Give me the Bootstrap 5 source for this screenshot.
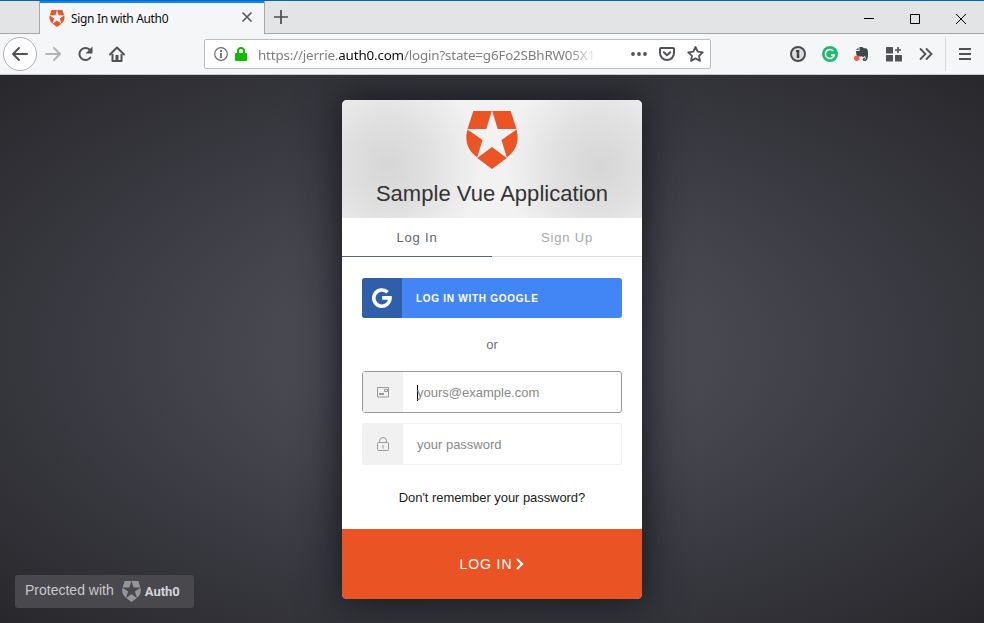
<!DOCTYPE html>
<html lang="en">
<head>
<meta charset="utf-8">
<meta name="viewport" content="width=device-width, initial-scale=1">
<title>Sign In with Auth0</title>
<link rel="stylesheet" href="https://cdn.jsdelivr.net/npm/bootstrap@5.3.0/dist/css/bootstrap.min.css">
<style>
body{width:984px;height:623px;overflow:hidden;font-family:"Liberation Sans",Arial,sans-serif;background:#2b2b30}
svg{display:block;flex:none}
.tabstrip{height:34px;background:#e3e4e6;border-top:1px solid #0a63b5;font-family:"Noto Sans","Open Sans",sans-serif}
.strip-fill{border-bottom:1px solid #a5a6a8}
.lead-gap{width:40px;border-right:1px solid #a5a6a8}
.active-tab{width:224px;background:#f5f6f7;border-top:2px solid #0a84ff;padding:0 11px 0 9px}
.tab-title{font-size:12px;letter-spacing:-.34px;color:#0c0c0d;margin-left:6px;line-height:30px}
.after-tabs{border-left:1px solid #a5a6a8}
.win-buttons{gap:32px}
.toolbar{height:41px;background:#f5f6f7;border-bottom:1px solid #c8c9cb}
.back-btn{width:34px;height:34px;border:1px solid #b1b1b3;background:#fdfdfd;margin-left:3px}
.nav-fwd{margin-left:8px}
.nav-ico{margin-left:15px}
.urlbar{width:507px;height:30px;background:#fff;border:1px solid #bcbdbf;border-radius:2px;margin-left:79px;padding:0 6px 0 9px}
.lock-ico{margin-left:7px}
.url-ico{margin-left:12px}
.url-text{width:340px;margin-left:11px;margin-right:34px;padding-top:1px;font:13.4px/28px "Noto Sans","Open Sans",sans-serif;color:#7e7e80;white-space:nowrap;letter-spacing:-.17px;
-webkit-mask-image:linear-gradient(90deg,#000 310px,transparent 340px);mask-image:linear-gradient(90deg,#000 310px,transparent 340px)}
.url-text b{font-weight:400;color:#0c0c0d}
.menu-sep{width:1px;height:34px;background:#d7d8da;margin:0 13px 0 11px}
.menu-ico{margin-right:13px}
.stage{height:548px;background:radial-gradient(ellipse farthest-corner at 50% 50%,#55555f 0%,#46464f 35%,#35353c 70%,#28282c 100%)}
.lock-card{width:300px;height:499px;margin-top:25px;border-radius:5px;box-shadow:0 0 40px 4px #18181e;background:#fff}
.lock-head{height:118px;background:radial-gradient(ellipse 95px 100px at 15% 55%,#d6d6d6 0,rgba(214,214,214,.7) 40%,rgba(214,214,214,0) 100%),radial-gradient(ellipse 95px 100px at 86% 55%,#d6d6d6 0,rgba(214,214,214,.7) 40%,rgba(214,214,214,0) 100%),#f2f2f2;padding-top:11px}
.lock-title{font-size:22px;line-height:26px;color:#333;margin:12px 0 0;letter-spacing:.03px}
.lock-tabs{height:39px;font-size:13px;letter-spacing:.85px}
.lock-tabs div{line-height:39px;border-bottom:1px solid #d9dce0;color:#a6a8ab}
.lock-tabs .current{color:#5c666f;border-color:#5c666f}
.lock-body{padding:21px 20px 0}
.google-btn{height:40px;background:#4285f4;border-radius:3px;color:#fff;font-size:10px;font-weight:700;letter-spacing:.73px}
.google-ico{width:40px;height:40px;background:#2f5eab}
.google-label{margin-left:14px}
.or-line{font-size:13px;line-height:20px;color:#6f6f72;margin:17px 0 16px}
.field{height:42px;border:1px solid #f1f1f1;border-radius:3px;font-size:13px;color:#888}
.field.focused{border-color:#999;margin-bottom:10px}
.field-ico{width:40px;background:#f1f1f1}
.field-text{margin-left:14px;line-height:40px;padding-top:1px}
.caret{width:1px;height:16px;background:#000;margin-right:-1px}
.forgot{font-size:13px;line-height:20px;color:#1c1c1c;margin-top:23px;letter-spacing:-.06px}
.submit{height:70px;background:#ea5323;color:#fff;font-size:14px;letter-spacing:.9px}
.protected{width:179px;height:33px;left:15px;top:575px;background:#48484d;border-radius:3px;color:#c9c9cb;padding-left:10px;font-size:14px}
.protected-label{margin-top:-2px}
.brand-word{font:700 13px "Roboto",sans-serif;color:#d4d4d6}
</style>
<script src="https://cdn.jsdelivr.net/npm/bootstrap@5.3.0/dist/js/bootstrap.bundle.min.js"></script>
</head>
<body>
<svg width="0" height="0" class="position-absolute"><defs>
<symbol id="shield" viewBox="0 0 52 58"><path d="M7.3 0H25.8L20.3 18H1.5ZM44.7 0H26.2L31.7 18H50.5ZM1.5 18.4L16.5 29L11.2 46.4C1 39-1.500 29 1.500 18.400ZM50.500 18.400L35.500 29L40.800 46.400C51 39 53.500 29 50.500 18.400ZM26 36L40.800 47L26 58L11.200 47Z"/></symbol>
</defs></svg>

<header>
<div class="tabstrip d-flex">
  <div class="strip-fill lead-gap"></div>
  <div class="active-tab d-flex align-items-center">
    <svg width="16" height="17" fill="#eb5424"><use href="#shield"/></svg>
    <span class="tab-title">Sign In with Auth0</span>
    <svg class="ms-auto mb-1" width="12" height="12" viewBox="0 0 12 12" stroke="#55565a" stroke-width="1.6"><path d="M1.500 1.500l9 9M10.500 1.500l-9 9"/></svg>
  </div>
  <div class="strip-fill after-tabs flex-grow-1 d-flex align-items-center">
    <svg class="ms-2" width="16" height="16" viewBox="0 0 16 16" stroke="#4a4b4f" stroke-width="1.700"><path d="M8 1v14M1 8h14"/></svg>
    <div class="win-buttons ms-auto d-flex pe-3 pt-1">
      <svg width="14" height="14" viewBox="0 0 14 14" stroke="#000"><path d="M2 6.500h10"/></svg>
      <svg width="14" height="14" viewBox="0 0 14 14" stroke="#000" fill="none"><path d="M2.500 2.500h9v9h-9z"/></svg>
      <svg width="14" height="14" viewBox="0 0 14 14" stroke="#000"><path d="M2 2l10 10M12 2L2 12"/></svg>
    </div>
  </div>
</div>

<div class="toolbar d-flex align-items-center">
  <div class="back-btn rounded-circle d-flex align-items-center justify-content-center">
    <svg width="18" height="16" viewBox="0 0 18 16" fill="none" stroke="#515256" stroke-width="2" stroke-linecap="round" stroke-linejoin="round"><path d="M16 8H2M8 2L2 8l6 6"/></svg>
  </div>
  <svg class="nav-fwd" width="17" height="16" viewBox="0 0 17 16" fill="none" stroke="#b3b4b6" stroke-width="2" stroke-linecap="round" stroke-linejoin="round"><path d="M1 8h14M9 2l6 6-6 6"/></svg>
  <svg class="nav-ico" width="17" height="16" viewBox="0 0 17 16"><path d="M13.300 11.500A6 6 0 1 1 12.500 3.600" fill="none" stroke="#515256" stroke-width="2" stroke-linecap="round"/><path d="M15.500 0.500v7h-7z" fill="#515256"/></svg>
  <svg class="nav-ico" width="16" height="16" viewBox="0 0 16 16"><path d="M1 8.500L8 1.500l7 7" fill="none" stroke="#515256" stroke-width="2" stroke-linecap="round" stroke-linejoin="round"/><path d="M3.500 8v7h9V8" fill="none" stroke="#515256" stroke-width="2" stroke-linejoin="round"/><path d="M6.500 9h3v6h-3z" fill="#515256"/></svg>
  <div class="urlbar d-flex align-items-center">
    <svg width="14" height="14" viewBox="0 0 14 14"><circle cx="7" cy="7" r="6.300" fill="none" stroke="#6b6c6f" stroke-width="1.200"/><path d="M7 3v2M7 6v5" stroke="#6b6c6f" stroke-width="1.800"/></svg>
    <svg class="lock-ico" width="12" height="14" viewBox="0 0 12 14"><path d="M3 7V4a3 3 0 0 1 6 0v3" fill="none" stroke="#12bc00" stroke-width="2"/><rect y="6" width="12" height="8" rx="1" fill="#12bc00"/></svg>
    <div class="url-text overflow-hidden">https://jerrie.<b>auth0.com</b>/login?state=g6Fo2SBhRW05X1</div>
    <svg width="16" height="4" fill="#515256"><circle cx="2" cy="2" r="1.900"/><circle cx="8" cy="2" r="1.900"/><circle cx="14" cy="2" r="1.900"/></svg>
    <svg class="url-ico" width="16" height="14" viewBox="0 0 16 14" fill="none" stroke="#515256" stroke-width="2" stroke-linecap="round" stroke-linejoin="round"><path d="M2 1h12a1 1 0 0 1 1 1v4a7 7 0 0 1-14 0V2a1 1 0 0 1 1-1z"/><path d="M4.800 5.200L8 8.200l3.200-3"/></svg>
    <svg class="url-ico" width="17" height="16" viewBox="0 0 17 16" fill="none" stroke="#515256" stroke-width="1.800" stroke-linejoin="round"><path d="M8.500 1l2.200 4.700 5.100.6-3.800 3.500 1 5.100-4.500-2.500L4 14.900l1-5.100L1.200 6.300l5.100-.6z"/></svg>
  </div>
  <div class="ms-auto d-flex align-items-center">
    <div class="d-flex align-items-center gap-3">
    <svg width="16" height="16" viewBox="0 0 16 16"><circle cx="8" cy="8" r="7" fill="#dededf" stroke="#4b4c50" stroke-width="2"/><path d="M6 4h3.300v3.500l-.6.500.6.500V12H6.700V8.500l.6-.5-.6-.5V6H6z" fill="#3f4043"/></svg>
    <svg width="16" height="16" viewBox="0 0 16 16"><circle cx="8" cy="8" r="8" fill="#1fb96f"/><path d="M11.300 5A4.500 4.500 0 1 0 12.300 9H9" fill="none" stroke="#fff" stroke-width="1.500"/></svg>
    <svg width="16" height="16" viewBox="0 0 16 16"><path d="M5.500 1h3l1 1 3 .5c1 .3 1.500 2 1.500 5 0 4-.5 7-2.500 7.500H9.800c-1.500-.3-1.500-3 .2-3.300l1 .1v1.200h-.8v.6h1.300c.5-1.500 0-3-.8-3.600-1 1.500-2.700 1-3 .2-1 .3-3.500.3-4.500-.2C2.200 9 2 6 2 5h3.500z" fill="#3f484b"/><path d="M2 4l2.500-2.500V4z" fill="#3f484b"/><circle cx="2.800" cy="12.200" r="2.700" fill="#ff5252"/></svg>
    <svg width="16" height="16" viewBox="0 0 16 16" fill="#515256"><rect y="1" width="7" height="6.500" rx=".6"/><rect y="9" width="7" height="6.500" rx=".6"/><rect x="9" y="9" width="7" height="6.500" rx=".6"/><path d="M11.200 1h1.600v2.200H15v1.600h-2.200V7h-1.600V4.800H9V3.200h2.200z"/></svg>
    <svg width="16" height="16" viewBox="0 0 16 16" fill="none" stroke="#515256" stroke-width="1.800" stroke-linecap="round"><path d="M2.500 3l5 5-5 5M8.500 3l5 5-5 5"/></svg>
    </div>
    <div class="menu-sep"></div>
    <svg class="menu-ico" width="12" height="12" viewBox="0 0 12 12" stroke="#515256" stroke-width="2"><path d="M0 1h12M0 6h12M0 11h12"/></svg>
  </div>
</div>
</header>

<main class="stage overflow-hidden d-flex justify-content-center align-items-start">
  <section class="lock-card overflow-hidden d-flex flex-column">
    <div class="lock-head text-center">
      <svg class="mx-auto" width="52" height="58" fill="#eb5424"><use href="#shield"/></svg>
      <h1 class="lock-title fw-normal">Sample Vue Application</h1>
    </div>
    <div class="lock-tabs d-flex text-center">
      <div class="w-50 current">Log In</div>
      <div class="w-50">Sign Up</div>
    </div>
    <div class="lock-body flex-grow-1">
      <div class="google-btn d-flex align-items-center overflow-hidden">
        <div class="google-ico d-flex align-items-center justify-content-center">
          <svg width="20" height="20" viewBox="0 0 20 20" fill="none" stroke="#fff" stroke-width="3.600"><path d="M15.600 4.300A8.100 8.100 0 1 0 18 9.900H10.200"/></svg>
        </div>
        <span class="google-label">LOG IN WITH GOOGLE</span>
      </div>
      <div class="or-line text-center">or</div>
      <div class="field focused d-flex">
        <div class="field-ico d-flex align-items-center justify-content-center">
          <svg width="12" height="11" viewBox="0 0 12 11" fill="none" stroke="#999"><path d="M.5.500h11v9.500H.5zM2 7.500h5M2 6.500h5M7.500 2.500h3v2h-3z"/></svg>
        </div>
        <div class="field-text d-flex align-items-center"><span class="caret"></span><span>yours@example.com</span></div>
      </div>
      <div class="field d-flex">
        <div class="field-ico d-flex align-items-center justify-content-center">
          <svg width="12" height="14" viewBox="0 0 12 14" fill="none" stroke="#999"><rect x=".5" y="5.500" width="11" height="8" rx="1"/><path d="M2.500 5.500V4a3.500 3.500 0 0 1 7 0v1.500M6 8v3.500"/></svg>
        </div>
        <div class="field-text">your password</div>
      </div>
      <div class="forgot text-center">Don't remember your password?</div>
    </div>
    <div class="submit d-flex align-items-center justify-content-center">
      <span>LOG IN</span>
      <svg class="ms-1" width="8" height="12" viewBox="0 0 8 12" fill="none" stroke="#fff" stroke-width="2.200"><path d="M1 1l5 5-5 5"/></svg>
    </div>
  </section>
  <div class="protected position-absolute d-flex align-items-center">
    <span class="protected-label">Protected with</span>
    <svg class="ms-2" width="19" height="21" fill="#949499"><use href="#shield"/></svg>
    <span class="brand-word ms-1">Auth0</span>
  </div>
</main>
</body>
</html>
